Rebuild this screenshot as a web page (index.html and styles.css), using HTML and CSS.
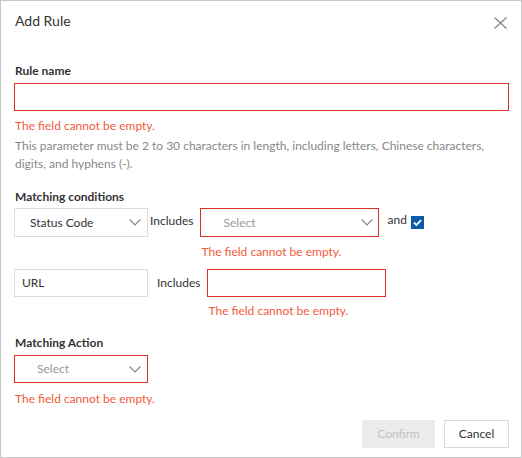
FILE: index.html
```html
<!DOCTYPE html>
<html>
<head>
<meta charset="utf-8">
<link rel="stylesheet" href="styles.css">
</head>
<body>
<div class="dialog">
  <div class="header">
    <div class="title">Add Rule</div>
    <svg class="close" width="13" height="12" viewBox="0 0 13 12"><path d="M0.5 0.5 L12.5 11.5 M12.5 0.5 L0.5 11.5" stroke="#8c8c8c" stroke-width="1.4" fill="none"/></svg>
  </div>

  <div class="label label-first">Rule name</div>
  <div class="input input-error input-full"></div>
  <div class="error error-first">The field cannot be empty.</div>
  <div class="help"><span class="nowrap">This parameter must be 2 to 30 characters in length, including letters, Chinese characters,</span><br>digits, and hyphens (-).</div>

  <div class="label label-cond">Matching conditions</div>
  <div class="row row-first">
    <div class="input select select-small tall"><span class="value value-status">Status Code</span><svg class="chev" width="12" height="7" viewBox="0 0 12 7"><path d="M0.5 0.5 L6 6 L11.5 0.5" stroke="#888" stroke-width="1.2" fill="none"/></svg></div>
    <div class="word word-first">Includes</div>
    <div class="col">
      <div class="input select input-error select-wide tall"><span class="value placeholder">Select</span><svg class="chev" width="12" height="7" viewBox="0 0 12 7"><path d="M0.5 0.5 L6 6 L11.5 0.5" stroke="#888" stroke-width="1.2" fill="none"/></svg></div>
      <div class="error error-row1">The field cannot be empty.</div>
    </div>
    <div class="word word-and">and</div>
    <div class="check"><svg width="13" height="13" viewBox="0 0 13 13"><rect width="13" height="13" fill="#0f5aa8"/><path d="M3 6.6 L5.4 9 L10 4.2" stroke="#fff" stroke-width="1.8" fill="none"/></svg></div>
  </div>

  <div class="row row-second">
    <div class="input select-small"><span class="value value-url">URL</span></div>
    <div class="word word-second">Includes</div>
    <div class="col">
      <div class="input input-error select-wide"></div>
      <div class="error error-row2">The field cannot be empty.</div>
    </div>
  </div>

  <div class="label label-action">Matching Action</div>
  <div class="input select input-error select-small select-action"><span class="value placeholder value-action">Select</span><svg class="chev" width="12" height="7" viewBox="0 0 12 7"><path d="M0.5 0.5 L6 6 L11.5 0.5" stroke="#888" stroke-width="1.2" fill="none"/></svg></div>
  <div class="error error-action">The field cannot be empty.</div>

  <div class="footer">
    <div class="btn btn-disabled">Confirm</div>
    <div class="btn btn-cancel">Cancel</div>
  </div>
</div>
</body>
</html>
```

FILE: styles.css
```css
html, body {
  margin: 0;
  padding: 0;
  background: #fff;
}
body {
  font-family: "Segoe UI", "Lato", "Open Sans", sans-serif;
  font-size: 12px;
  color: #333;
}
.dialog {
  width: 522px;
  height: 458px;
  box-sizing: border-box;
  border: 1px solid #c6c6c6;
  padding: 0 12px 0 13px;
  display: flex;
  flex-direction: column;
  align-items: flex-start;
}
.header {
  align-self: stretch;
  display: flex;
  justify-content: space-between;
  align-items: flex-start;
  margin-top: 10px;
  height: 20px;
}
.title {
  font-size: 14px;
  line-height: 20px;
  color: #333;
  margin-left: 1px;
}
.close {
  margin-top: 6px;
  margin-right: 2px;
}
.label {
  font-weight: bold;
  line-height: 18px;
  color: #333;
  margin-left: 1px;
}
.label-first { margin-top: 31px; }
.label-cond { margin-top: 15px; }
.label-action { margin-top: 14px; }
.input {
  box-sizing: border-box;
  height: 28px;
  border: 1px solid #dcdcdc;
  background: #fff;
  display: flex;
  align-items: center;
}
.input.tall { height: 29px; }
.input-error { border-color: #d93026; }
.input-full {
  align-self: stretch;
  margin-top: 3px;
}
.error {
  color: #f25a3c;
  line-height: 18px;
  margin-left: 1px;
}
.error-first { margin-top: 6px; }
.help {
  color: #888;
  line-height: 18px;
  margin-top: 2px;
  margin-left: 1px;
}
.nowrap { white-space: nowrap; }
.row {
  display: flex;
  align-items: flex-start;
}
.row-first { margin-top: 2px; }
.row-second { margin-top: 8px; }
.select {
  justify-content: space-between;
}
.select-small { width: 134px; }
.select-wide { width: 179px; }
.value { line-height: 18px; }
.value-status { margin-left: 15px; }
.value-url { margin-left: 7px; }
.placeholder { color: #999; margin-left: 22px; }
.value-action { margin-left: 22px; }
.chev { margin-right: 6px; }
.select-wide .chev { margin-right: 5px; }
.word {
  line-height: 18px;
  margin-top: 4px;
}
.word-first { margin-left: 2px; margin-right: 7px; }
.word-second { margin-left: 9px; margin-right: 7px; margin-top: 5px; }
.col {
  display: flex;
  flex-direction: column;
}
.error-row1 { margin-top: 6px; }
.error-row2 { margin-top: 5px; }
.word-and { margin-left: 8px; margin-top: 3px; }
.check {
  margin-left: 4px;
  margin-top: 8px;
  height: 13px;
}
.check svg { display: block; }
.select-action { margin-top: 3px; }
.error-action { margin-top: 7px; }
.footer {
  align-self: stretch;
  display: flex;
  justify-content: flex-end;
  gap: 9px;
  margin-top: 12px;
}
.btn {
  box-sizing: border-box;
  height: 28px;
  display: flex;
  align-items: center;
  justify-content: center;
  line-height: 18px;
}
.btn-disabled {
  width: 73px;
  background: #ebebeb;
  color: #c3c3c3;
}
.btn-cancel {
  width: 65px;
  border: 1px solid #d9d9d9;
  color: #333;
}
```
